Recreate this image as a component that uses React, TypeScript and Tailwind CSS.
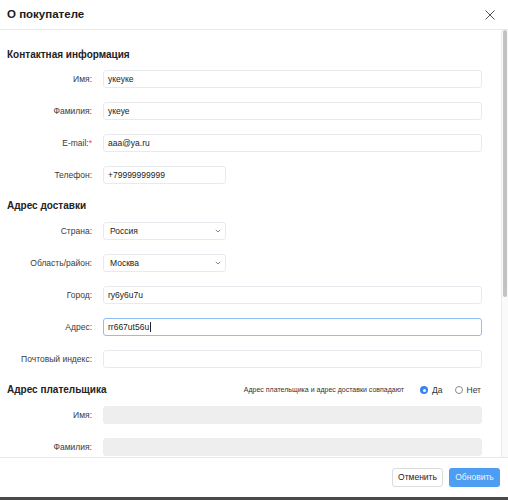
import React from "react";

const font = { fontFamily: '"Liberation Sans", Arial, sans-serif' };

function Label({ text, required }: { text: string; required?: boolean }) {
  return (
    <div className="w-[92px] shrink-0 text-right text-[8.5px] leading-[12px] text-[#3a3a3a]">
      {text}
      {required && <span className="text-[#e5484d]">*</span>}
    </div>
  );
}

function TextInput({
  value,
  width,
  focused,
  disabled,
}: {
  value?: string;
  width?: "short" | "full";
  focused?: boolean;
  disabled?: boolean;
}) {
  const w = width === "short" ? "w-[123px]" : "w-[379px]";
  const look = disabled
    ? "bg-[#eeeeee] border-[#eeeeee]"
    : focused
    ? "bg-white border-[#8fbef3]"
    : "bg-white border-[#e9e9f0]";
  return (
    <div
      className={`${w} ${look} h-[18px] shrink-0 rounded-[3px] border flex items-center pl-[4px] text-[8.5px] text-[#222]`}
    >
      {value}
      {focused && <span className="ml-[1px] h-[10px] w-px bg-[#222]" />}
    </div>
  );
}

function Select({ value }: { value: string }) {
  return (
    <div className="w-[123px] h-[18px] shrink-0 rounded-[3px] border border-[#e9e9f0] bg-white flex items-center justify-between pl-[6px] pr-[4px] text-[8.5px] text-[#222]">
      <span>{value}</span>
      <svg width="6" height="4" viewBox="0 0 6 4" fill="none">
        <path d="M0.8 0.8 L3 3 L5.2 0.8" stroke="#777" strokeWidth="0.9" />
      </svg>
    </div>
  );
}

function Row({ children, className = "" }: { children: React.ReactNode; className?: string }) {
  return <div className={`flex items-center gap-[11px] ${className}`}>{children}</div>;
}

function Heading({ children, className = "" }: { children: React.ReactNode; className?: string }) {
  return (
    <div className={`pl-[7px] text-[10px] leading-[12px] font-bold text-[#222] ${className}`}>
      {children}
    </div>
  );
}

function Radio({ checked, label }: { checked?: boolean; label: string }) {
  return (
    <div className="flex items-center gap-[4px]">
      {checked ? (
        <span className="w-[8px] h-[8px] rounded-full bg-[#3d83f0] flex items-center justify-center">
          <span className="w-[3px] h-[3px] rounded-full bg-white" />
        </span>
      ) : (
        <span className="w-[8px] h-[8px] rounded-full border border-[#8a8a8a] bg-white" />
      )}
      <span className="text-[8.5px] text-[#333]">{label}</span>
    </div>
  );
}

export default function App() {
  return (
    <div style={font} className="w-[508px] h-[500px] bg-[#4a4a4a] overflow-hidden">
      <div className="w-[508px] h-[497px] bg-white flex flex-col">
        {/* header */}
        <div className="h-[30px] shrink-0 flex items-center justify-between pl-[7px] pr-[13px] border-b border-[#e6e8ee]">
          <span className="text-[11.5px] font-bold text-[#1a1a1a]">О покупателе</span>
          <svg width="10" height="10" viewBox="0 0 10 10" fill="none">
            <path d="M0.5 0.5 L9.5 9.5 M9.5 0.5 L0.5 9.5" stroke="#555" strokeWidth="1" />
          </svg>
        </div>

        {/* body */}
        <div className="flex-1 flex min-h-0">
          <div className="flex-1 overflow-hidden flex flex-col">
            <Heading className="mt-[19px]">Контактная информация</Heading>
            <Row className="mt-[9px]">
              <Label text="Имя:" />
              <TextInput value="укеуке" />
            </Row>
            <Row className="mt-[14px]">
              <Label text="Фамилия:" />
              <TextInput value="укеуе" />
            </Row>
            <Row className="mt-[14px]">
              <Label text="E-mail:" required />
              <TextInput value="aaa@ya.ru" />
            </Row>
            <Row className="mt-[14px]">
              <Label text="Телефон:" />
              <TextInput value="+79999999999" width="short" />
            </Row>

            <Heading className="mt-[16px]">Адрес доставки</Heading>
            <Row className="mt-[10px]">
              <Label text="Страна:" />
              <Select value="Россия" />
            </Row>
            <Row className="mt-[14px]">
              <Label text="Область/район:" />
              <Select value="Москва" />
            </Row>
            <Row className="mt-[14px]">
              <Label text="Город:" />
              <TextInput value="ry6y6u7u" />
            </Row>
            <Row className="mt-[14px]">
              <Label text="Адрес:" />
              <TextInput value="rr667ut56u" focused />
            </Row>
            <Row className="mt-[14px]">
              <Label text="Почтовый индекс:" />
              <TextInput />
            </Row>

            <div className="mt-[16px] flex items-center justify-between pr-[20px]">
              <Heading>Адрес плательщика</Heading>
              <div className="flex items-center gap-[12px]">
                <span className="text-[7px] text-[#333] mr-[4px]">
                  Адрес плательщика и адрес доставки совпадают
                </span>
                <Radio checked label="Да" />
                <Radio label="Нет" />
              </div>
            </div>
            <Row className="mt-[9px]">
              <Label text="Имя:" />
              <TextInput disabled />
            </Row>
            <Row className="mt-[14px]">
              <Label text="Фамилия:" />
              <TextInput disabled />
            </Row>
          </div>

          {/* scrollbar */}
          <div className="w-[7px] shrink-0 border-l border-[#ececec] bg-[#fafafa] pl-[1px] pr-[1px]">
            <div className="h-[267px] rounded-[2px] bg-[#c2c2c2]" />
          </div>
        </div>

        {/* footer */}
        <div className="h-[40px] shrink-0 border-t border-[#e8e8e8] flex items-center justify-end gap-[6px] pr-[8px]">
          <button className="h-[19px] w-[51px] rounded-[3px] border border-[#dcdcdc] bg-white text-[8.5px] text-[#222]">
            Отменить
          </button>
          <button className="h-[19px] w-[51px] rounded-[3px] bg-[#4d9df2] text-[8.5px] text-[#eef5ff]">
            Обновить
          </button>
        </div>
      </div>
    </div>
  );
}
